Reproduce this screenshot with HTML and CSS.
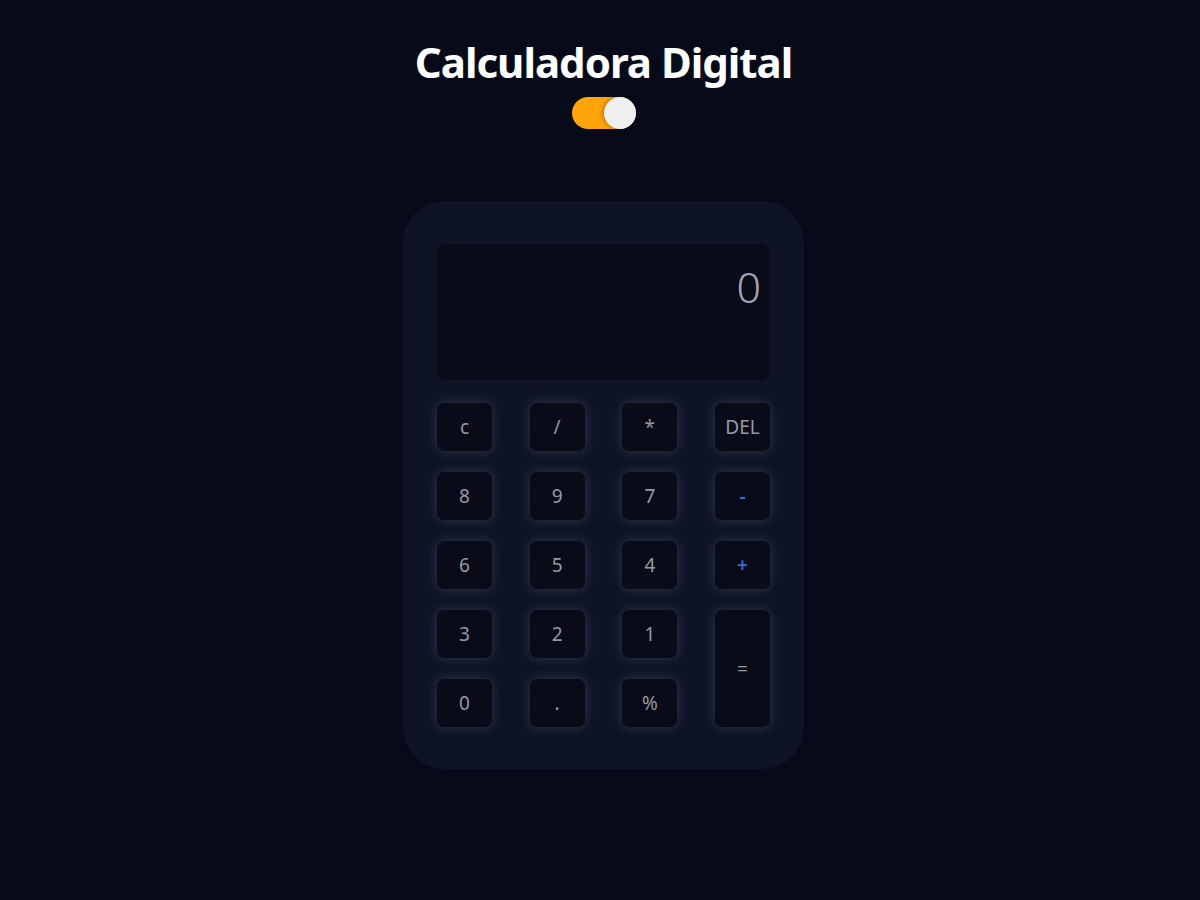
FILE: index.html
```html
<!DOCTYPE html>
<html lang="pt">
<head>
<meta charset="utf-8">
<title>Calculadora Digital</title>
<link rel="stylesheet" href="styles.css">
</head>
<body>
<main class="page">
  <h1 class="title">Calculadora Digital</h1>
  <label class="toggle">
    <span class="toggle-knob"></span>
  </label>
  <section class="calc">
    <div class="display">0</div>
    <div class="keys">
      <button class="key">c</button>
      <button class="key">/</button>
      <button class="key">*</button>
      <button class="key">DEL</button>
      <button class="key">8</button>
      <button class="key">9</button>
      <button class="key">7</button>
      <button class="key op">-</button>
      <button class="key">6</button>
      <button class="key">5</button>
      <button class="key">4</button>
      <button class="key op">+</button>
      <button class="key">3</button>
      <button class="key">2</button>
      <button class="key">1</button>
      <button class="key equal">=</button>
      <button class="key">0</button>
      <button class="key">.</button>
      <button class="key">%</button>
    </div>
  </section>
</main>
</body>
</html>
```

FILE: styles.css
```css
* { box-sizing: border-box; }
html, body {
  margin: 0;
  padding: 0;
  background: #070b19;
  height: 100%;
}
body {
  font-family: "Noto Sans", "Open Sans", sans-serif;
}
.page {
  display: flex;
  flex-direction: column;
  align-items: center;
  padding-left: 7px;
}
.title {
  margin: 36px 0 0;
  font-size: 42px;
  line-height: 52px;
  font-weight: 700;
  color: #ffffff;
  letter-spacing: -1px;
}
.toggle {
  display: flex;
  justify-content: flex-end;
  width: 64px;
  height: 32px;
  margin-top: 9px;
  border-radius: 16px;
  background: #ffa509;
}
.toggle-knob {
  width: 32px;
  height: 32px;
  border-radius: 50%;
  background: #efefef;
  box-shadow: -2px 0 4px rgba(0, 0, 0, 0.25);
}
.calc {
  width: 401px;
  margin-top: 72px;
  padding: 43px 34px 42px 34px;
  border-radius: 42px;
  background: #0e1426;
  display: flex;
  flex-direction: column;
  align-items: center;
}
.display {
  width: 331px;
  height: 136px;
  border-radius: 8px;
  background: #090b18;
  color: #a3a7b1;
  font-size: 43px;
  font-weight: 300;
  line-height: 1;
  text-align: right;
  padding: 21px 8px 0 0;
}
.keys {
  margin-top: 23px;
  width: 333px;
  display: grid;
  grid-template-columns: repeat(4, 55px);
  grid-auto-rows: 48px;
  row-gap: 21px;
  justify-content: space-between;
}
.key {
  border: none;
  border-radius: 7px;
  background: #090b18;
  color: #959aa5;
  font-family: "Noto Sans", "Open Sans", sans-serif;
  font-size: 19px;
  padding: 0;
  box-shadow: 0 0 12px rgba(195, 205, 240, 0.2);
}
.key.op {
  color: #3a6fd8;
  font-weight: 600;
}
.key.equal {
  grid-column: 4;
  grid-row: 4 / span 2;
}
```
